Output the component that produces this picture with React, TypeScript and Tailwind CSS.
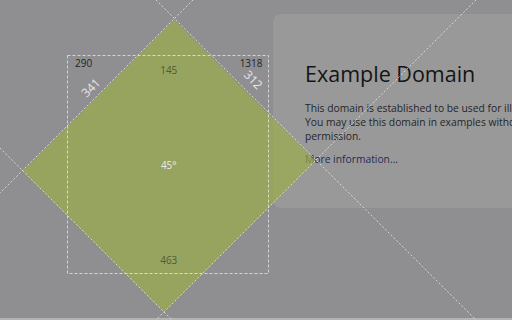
import React from "react";

const W = 512;
const H = 320;

function Guides() {
  // lines through the four edges of the rotated element, extended to the viewport
  const dash = "2 2";
  const stroke = "rgba(255,255,255,0.62)";
  return (
    <svg className="absolute inset-0" width={W} height={H} viewBox={`0 0 ${W} ${H}`}>
      <line x1={193} y1={0} x2={0} y2={193} stroke={stroke} strokeWidth={1} strokeDasharray={dash} />
      <line x1={156} y1={0} x2={476} y2={320} stroke={stroke} strokeWidth={1} strokeDasharray={dash} />
      <line x1={476} y1={0} x2={156} y2={320} stroke={stroke} strokeWidth={1} strokeDasharray={dash} />
      <line x1={0} y1={148} x2={172} y2={320} stroke={stroke} strokeWidth={1} strokeDasharray={dash} />
      <rect x={67.5} y={55.5} width={201} height={218} fill="none" stroke={stroke} strokeWidth={1} strokeDasharray="3 2" />
    </svg>
  );
}

export default function App() {
  return (
    <div
      className="relative flex h-[320px] w-[512px] flex-col overflow-hidden bg-[#8f8f91]"
      style={{ fontFamily: '"Open Sans", "Noto Sans", sans-serif' }}
    >
      {/* dimmed page */}
      <div className="ml-[273px] mt-[14px] h-[194px] w-[420px] shrink-0 rounded-[8px] bg-[#99999a] pl-[32px] pt-[45px]">
        <h1 className="m-0 whitespace-nowrap text-[21.5px] font-normal leading-[29px] text-[#141414]">
          Example Domain
        </h1>
        <p className="mt-[12.7px] whitespace-nowrap text-[10.3px] leading-[14px] text-[#262626]">
          This domain is established to be used for illustrative examples in documents.
          <br />
          You may use this domain in examples without prior coordination or asking for
          <br />
          permission.
        </p>
        <p className="mt-[9.6px] whitespace-nowrap text-[10.3px] leading-[14px]">
          <a className="text-[#232b55]">More information...</a>
        </p>
      </div>
      <div className="mt-auto h-[2px] w-full bg-[#b3b3b4]" />

      {/* overlay: rotated element and its measurements */}
      <div className="pointer-events-none absolute inset-0">
        <div className="absolute left-[68.75px] top-[58.5px] h-[214px] w-[200px] rotate-45 bg-[rgba(153,172,76,0.72)]" />
        <Guides />
        <div className="absolute left-[67px] top-[55px] flex h-[218px] w-[201px] flex-col pb-[8px] pl-[8px] pr-[5.5px] pt-[3px] text-[10px] leading-[10px]">
          <div className="grid grid-cols-[1fr_auto_1fr] items-start">
            <span className="justify-self-start text-[#242424]">290</span>
            <span className="mt-[6.8px] text-[#4f5c33]">145</span>
            <span className="justify-self-end text-[#242424]">1318</span>
          </div>
          <div className="flex flex-1 items-center justify-center text-[#ececec]">45°</div>
          <div className="text-center text-[#4f5c33]">463</div>
        </div>
        <div className="absolute left-[70.5px] top-[82px] w-[40px] -rotate-45 text-center text-[12px] leading-[12px] text-[#e6e6e6]">341</div>
        <div className="absolute left-[233px] top-[74px] w-[40px] rotate-45 text-center text-[12px] leading-[12px] text-[#e6e6e6]">312</div>
      </div>
    </div>
  );
}
